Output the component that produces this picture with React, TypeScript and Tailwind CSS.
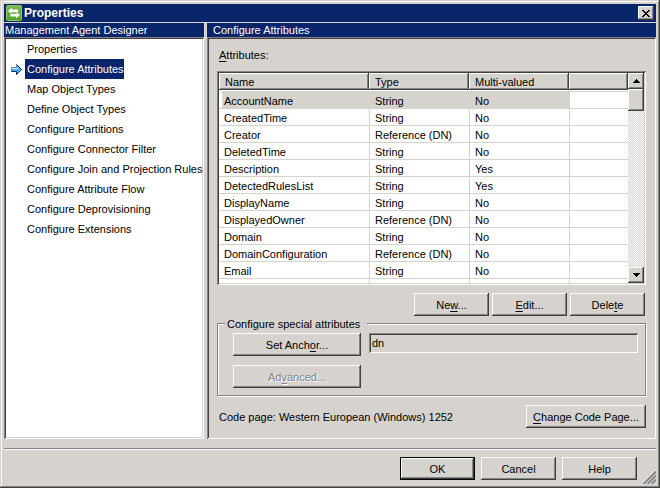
import type { ReactNode } from "react";

const RAISED =
  "bg-[#d6d3ce] shadow-[inset_-1px_-1px_#424142,inset_1px_1px_#ffffff,inset_-2px_-2px_#848284]";
const SUNKEN =
  "p-0.5 shadow-[inset_1px_1px_#848284,inset_-1px_-1px_#ffffff,inset_2px_2px_#424142,inset_-2px_-2px_#d6d3ce]";

const steps = [
  "Properties",
  "Configure Attributes",
  "Map Object Types",
  "Define Object Types",
  "Configure Partitions",
  "Configure Connector Filter",
  "Configure Join and Projection Rules",
  "Configure Attribute Flow",
  "Configure Deprovisioning",
  "Configure Extensions",
];

const attributes = [
  ["AccountName", "String", "No"],
  ["CreatedTime", "String", "No"],
  ["Creator", "Reference (DN)", "No"],
  ["DeletedTime", "String", "No"],
  ["Description", "String", "Yes"],
  ["DetectedRulesList", "String", "Yes"],
  ["DisplayName", "String", "No"],
  ["DisplayedOwner", "Reference (DN)", "No"],
  ["Domain", "String", "No"],
  ["DomainConfiguration", "Reference (DN)", "No"],
  ["Email", "String", "No"],
];

function Key({ children }: { children: ReactNode }) {
  return <span className="underline underline-offset-2">{children}</span>;
}

function PushButton({
  children,
  width = "w-[75px]",
  isDefault = false,
  disabled = false,
}: {
  children: ReactNode;
  width?: string;
  isDefault?: boolean;
  disabled?: boolean;
}) {
  return (
    <button
      type="button"
      disabled={disabled}
      className={`h-[23px] shrink-0 ${width} ${isDefault ? "border border-black" : ""} ${RAISED} ${
        disabled ? "text-[#848284] [text-shadow:1px_1px_#ffffff]" : ""
      }`}
    >
      {children}
    </button>
  );
}

function AppIcon() {
  return (
    <svg width="16" height="16" viewBox="0 0 16 16" aria-hidden="true">
      <defs>
        <linearGradient id="leaf" x1="0" y1="0" x2="0" y2="1">
          <stop offset="0" stopColor="#7cb854" />
          <stop offset="1" stopColor="#4fa428" />
        </linearGradient>
      </defs>
      <rect x="0.5" y="0.5" width="15" height="15" rx="1" fill="url(#leaf)" stroke="#8cc46c" />
      <path d="M2 6 6 2.500V4.500H12V7.500H6V9.500Z" fill="#fff" />
      <path d="M14 10 10 6.500V8.500H4.500V11.500H10V13.500Z" fill="#fff" />
      <path d="M4.500 8H11" stroke="#5aa838" />
    </svg>
  );
}

function StepArrow() {
  return (
    <svg width="11" height="11" viewBox="0 0 11 11" aria-hidden="true">
      <path d="M0.500 3.500H5.500V0.500L10.500 5.500L5.500 10.500V7.500H0.500Z" fill="#4aaef0" />
      <path d="M1 4.500H7" stroke="#d6f0ff" />
      <path d="M0.500 7.500V3.500H5.500V0.500" fill="none" stroke="#6b8aa5" />
      <path d="M5.500 0.500L10.500 5.500L5.500 10.500V7.500H0.500" fill="none" stroke="#10284a" />
    </svg>
  );
}

function TitleBar() {
  return (
    <header className="flex h-[18px] items-center gap-0.5 bg-[#08246b] px-0.5 text-white">
      <AppIcon />
      <h1 className="flex-1 text-[12px] leading-4 font-bold">Properties</h1>
      <button
        type="button"
        aria-label="Close"
        className={`flex h-[14px] w-4 items-center justify-center ${RAISED}`}
      >
        <svg width="8" height="7" viewBox="0 0 8 7" shapeRendering="crispEdges" aria-hidden="true">
          <path
            d="M0 0h2v1H0zM6 0h2v1H6zM1 1h2v1H1zM5 1h2v1H5zM2 2h4v1H2zM3 3h2v1H3zM2 4h4v1H2zM1 5h2v1H1zM5 5h2v1H5zM0 6h2v1H0zM6 6h2v1H6z"
            fill="#000"
          />
        </svg>
      </button>
    </header>
  );
}

function StepList() {
  return (
    <nav className="flex w-[200px] shrink-0 flex-col">
      <h2 className="h-[14px] bg-[#08246b] px-px leading-[14px] text-white">
        Management Agent Designer
      </h2>
      <ul className={`flex-1 bg-white ${SUNKEN}`}>
        {steps.map((step) => {
          const current = step === "Configure Attributes";
          return (
            <li key={step} className="flex h-5 items-center">
              <span className="flex w-[19px] shrink-0 justify-end pr-[3px]">
                {current && <StepArrow />}
              </span>
              <button
                type="button"
                aria-current={current ? "step" : undefined}
                className={`h-5 pl-0.5 whitespace-nowrap ${current ? "bg-[#08246b] text-white" : ""}`}
              >
                {step}
              </button>
            </li>
          );
        })}
      </ul>
    </nav>
  );
}

function ScrollBar() {
  return (
    <div className="flex w-4 shrink-0 flex-col bg-[repeating-conic-gradient(#ffffff_0_25%,#d6d3ce_0_50%)] bg-[length:2px_2px]">
      <button
        type="button"
        aria-label="Scroll up"
        className={`flex h-4 items-center justify-center ${RAISED}`}
      >
        <svg width="7" height="4" viewBox="0 0 7 4" shapeRendering="crispEdges" aria-hidden="true">
          <path d="M3 0h1v1H3zM2 1h3v1H2zM1 2h5v1H1zM0 3h7v1H0z" />
        </svg>
      </button>
      <div className={`h-[22px] ${RAISED}`} />
      <div className="flex-1" />
      <button
        type="button"
        aria-label="Scroll down"
        className={`flex h-4 items-center justify-center ${RAISED}`}
      >
        <svg width="7" height="4" viewBox="0 0 7 4" shapeRendering="crispEdges" aria-hidden="true">
          <path d="M0 0h7v1H0zM1 1h5v1H1zM2 2h3v1H2zM3 3h1v1H3z" />
        </svg>
      </button>
    </div>
  );
}

function AttributeTable() {
  const head = `h-[17px] p-0 px-1.5 text-left font-normal ${RAISED}`;
  return (
    <div className={`flex h-[214px] bg-white ${SUNKEN}`}>
      <div className="flex-1 overflow-hidden">
        <table
          aria-labelledby="attributes-label"
          className="w-full table-fixed border-separate border-spacing-0 leading-[14px]"
        >
          <colgroup>
            <col className="w-[150px]" />
            <col className="w-[100px]" />
            <col className="w-[100px]" />
            <col />
          </colgroup>
          <thead>
            <tr>
              <th className={head}>Name</th>
              <th className={head}>Type</th>
              <th className={head}>Multi-valued</th>
              <th className={head} />
            </tr>
            <tr>
              <td colSpan={4} className="h-px p-0" />
            </tr>
          </thead>
          <tbody>
            {attributes.map(([name, type, multi], i) => {
              const cell = `h-[17px] border-t border-[#d6d3ce] pt-0.5 ${i === 0 ? "bg-[#d6d3ce]" : ""}`;
              return (
                <tr key={name}>
                  <td className={`${cell} ${i === 0 ? "border-l-3 border-l-white pl-0.5" : "pl-[5px]"}`}>
                    {name}
                  </td>
                  <td className={`${cell} border-l pl-[5px]`}>{type}</td>
                  <td className={`${cell} border-l pl-[5px]`}>{multi}</td>
                  <td className="border-t border-l border-[#d6d3ce] p-0" />
                </tr>
              );
            })}
            <tr>
              <td className="h-[5px] border-t border-[#d6d3ce] p-0" />
              <td className="border-t border-l border-[#d6d3ce] p-0" />
              <td className="border-t border-l border-[#d6d3ce] p-0" />
              <td className="border-t border-l border-[#d6d3ce] p-0" />
            </tr>
          </tbody>
        </table>
      </div>
      <ScrollBar />
    </div>
  );
}

function AttributesPanel() {
  return (
    <main className="flex min-w-0 flex-1 flex-col">
      <h2 className="h-[14px] bg-[#08246b] px-1.5 leading-[14px] text-white">
        Configure Attributes
      </h2>
      <section className={`flex-1 ${SUNKEN}`}>
        <div className="px-2 pt-2 pb-2">
          <p id="attributes-label" className="h-6 px-0.5 leading-4">
            <Key>A</Key>ttributes:
          </p>
          <AttributeTable />
          <div className="mt-2 flex justify-end gap-[3px] pr-px">
            <PushButton>
              Ne<Key>w</Key>...
            </PushButton>
            <PushButton>
              <Key>E</Key>dit...
            </PushButton>
            <PushButton>
              Dele<Key>t</Key>e
            </PushButton>
          </div>
          <fieldset className="border border-[#848284] px-[7px] pb-[7px] shadow-[1px_1px_#ffffff,inset_1px_1px_#ffffff]">
            <legend className="h-[14px] w-[142px] bg-[#d6d3ce] px-0.5 leading-4">
              Configure special attributes
            </legend>
            <div className="flex items-start gap-2 pt-[3px] pl-2">
              <div className="flex flex-col gap-[9px]">
                <PushButton width="w-[128px]">
                  Set Anch<Key>o</Key>r...
                </PushButton>
                <PushButton width="w-[128px]" disabled>
                  Ad<Key>v</Key>anced...
                </PushButton>
              </div>
              <input
                aria-label="Anchor"
                readOnly
                defaultValue="dn"
                className={`h-5 min-w-0 flex-1 bg-[#d6d3ce] indent-px outline-none ${SUNKEN}`}
              />
            </div>
          </fieldset>
          <div className="mt-[9px] flex items-center justify-between pl-0.5">
            <p>Code page: Western European (Windows) 1252</p>
            <PushButton width="w-[120px]">
              <Key>C</Key>hange Code Page...
            </PushButton>
          </div>
        </div>
      </section>
    </main>
  );
}

function ResizeGrip() {
  return (
    <svg
      className="absolute right-1 bottom-1"
      width="14"
      height="14"
      viewBox="0 0 14 14"
      aria-hidden="true"
    >
      <path d="M0 13.500 13.500 0M4 13.500 13.500 4M8 13.500 13.500 8" stroke="#fff" />
      <path d="M1.500 14 14 1.500M5.500 14 14 5.500M9.500 14 14 9.500" stroke="#848284" strokeWidth="2" />
    </svg>
  );
}

export default function App() {
  return (
    <div className="relative flex min-h-screen flex-col bg-[#d6d3ce] p-1 font-['Liberation_Sans',Arial,sans-serif] text-[11px] leading-4 text-black shadow-[inset_-1px_-1px_#424142,inset_1px_1px_#d6d3ce,inset_-2px_-2px_#848284,inset_2px_2px_#ffffff]">
      <TitleBar />
      <div className="mt-px flex flex-1 gap-[3px]">
        <StepList />
        <AttributesPanel />
      </div>
      <footer className="mt-[9px] flex justify-end gap-1.5 border-t border-[#848284] pt-2 pr-[19px] pb-1 shadow-[inset_0_1px_#ffffff]">
        <PushButton isDefault>OK</PushButton>
        <PushButton>Cancel</PushButton>
        <PushButton>Help</PushButton>
      </footer>
      <ResizeGrip />
    </div>
  );
}
